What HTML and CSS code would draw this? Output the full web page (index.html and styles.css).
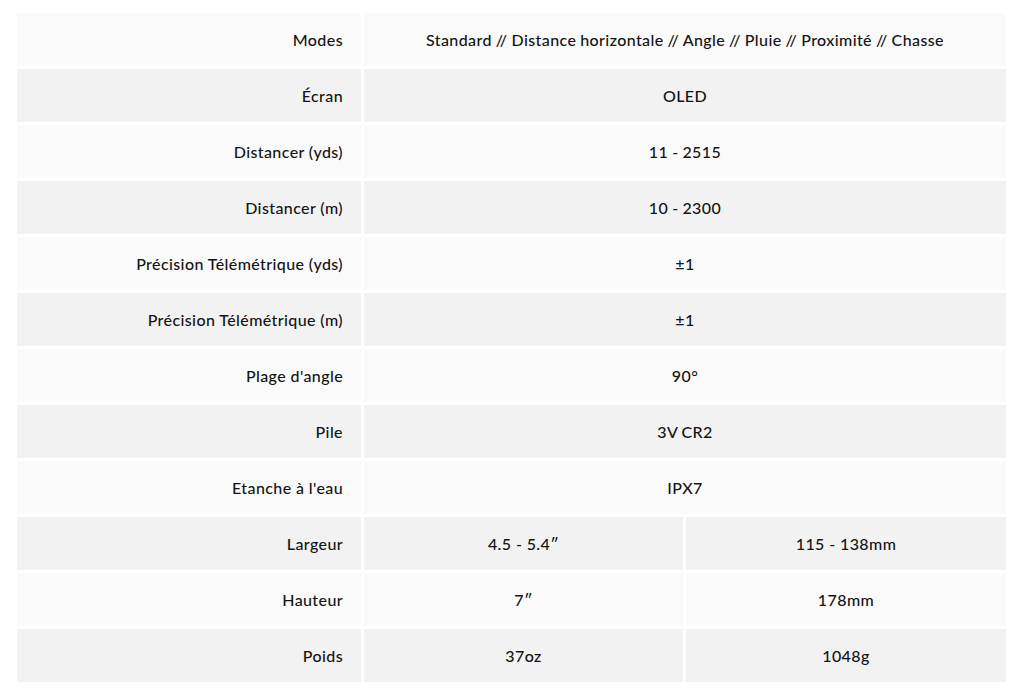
FILE: index.html
```html
<!DOCTYPE html>
<html lang="fr">
<head>
<meta charset="utf-8">
<link rel="stylesheet" href="styles.css">
</head>
<body>
<div class="specs">
  <div class="row light"><div class="label">Modes</div><div class="val wide">Standard // Distance horizontale // Angle // Pluie // Proximité // Chasse</div></div>
  <div class="row gray"><div class="label">Écran</div><div class="val wide">OLED</div></div>
  <div class="row light"><div class="label">Distancer (yds)</div><div class="val wide">11 - 2515</div></div>
  <div class="row gray"><div class="label">Distancer (m)</div><div class="val wide">10 - 2300</div></div>
  <div class="row light"><div class="label">Précision Télémétrique (yds)</div><div class="val wide">±1</div></div>
  <div class="row gray"><div class="label">Précision Télémétrique (m)</div><div class="val wide">±1</div></div>
  <div class="row light"><div class="label">Plage d'angle</div><div class="val wide">90°</div></div>
  <div class="row gray"><div class="label">Pile</div><div class="val wide">3V CR2</div></div>
  <div class="row light"><div class="label">Etanche à l'eau</div><div class="val wide">IPX7</div></div>
  <div class="row gray"><div class="label">Largeur</div><div class="val">4.5 - 5.4″</div><div class="val">115 - 138mm</div></div>
  <div class="row light"><div class="label">Hauteur</div><div class="val">7″</div><div class="val">178mm</div></div>
  <div class="row gray"><div class="label">Poids</div><div class="val">37oz</div><div class="val">1048g</div></div>
</div>
</body>
</html>
```
FILE: styles.css
```css
html, body {
  margin: 0;
  padding: 0;
  background: #ffffff;
}
body {
  font-family: Lato, "Open Sans", sans-serif;
  font-size: 16px;
  font-weight: 500;
  color: #141414;
}
.specs {
  margin: 13px 0 0 17px;
  width: 989px;
  display: grid;
  grid-template-columns: 344px 319px 320px;
  grid-auto-rows: 53px;
  column-gap: 3px;
  row-gap: 3px;
}
.row {
  display: contents;
}
.label, .val {
  display: flex;
  align-items: center;
  letter-spacing: 0.4px;
  font-variant-ligatures: none;
}
.label {
  justify-content: flex-end;
  padding-right: 18px;
}
.val {
  justify-content: center;
}
.val.wide {
  grid-column: 2 / 4;
  word-spacing: -0.5px;
}
.light .label, .light .val {
  background: #fafafa;
}
.gray .label, .gray .val {
  background: #f2f2f2;
}
```
